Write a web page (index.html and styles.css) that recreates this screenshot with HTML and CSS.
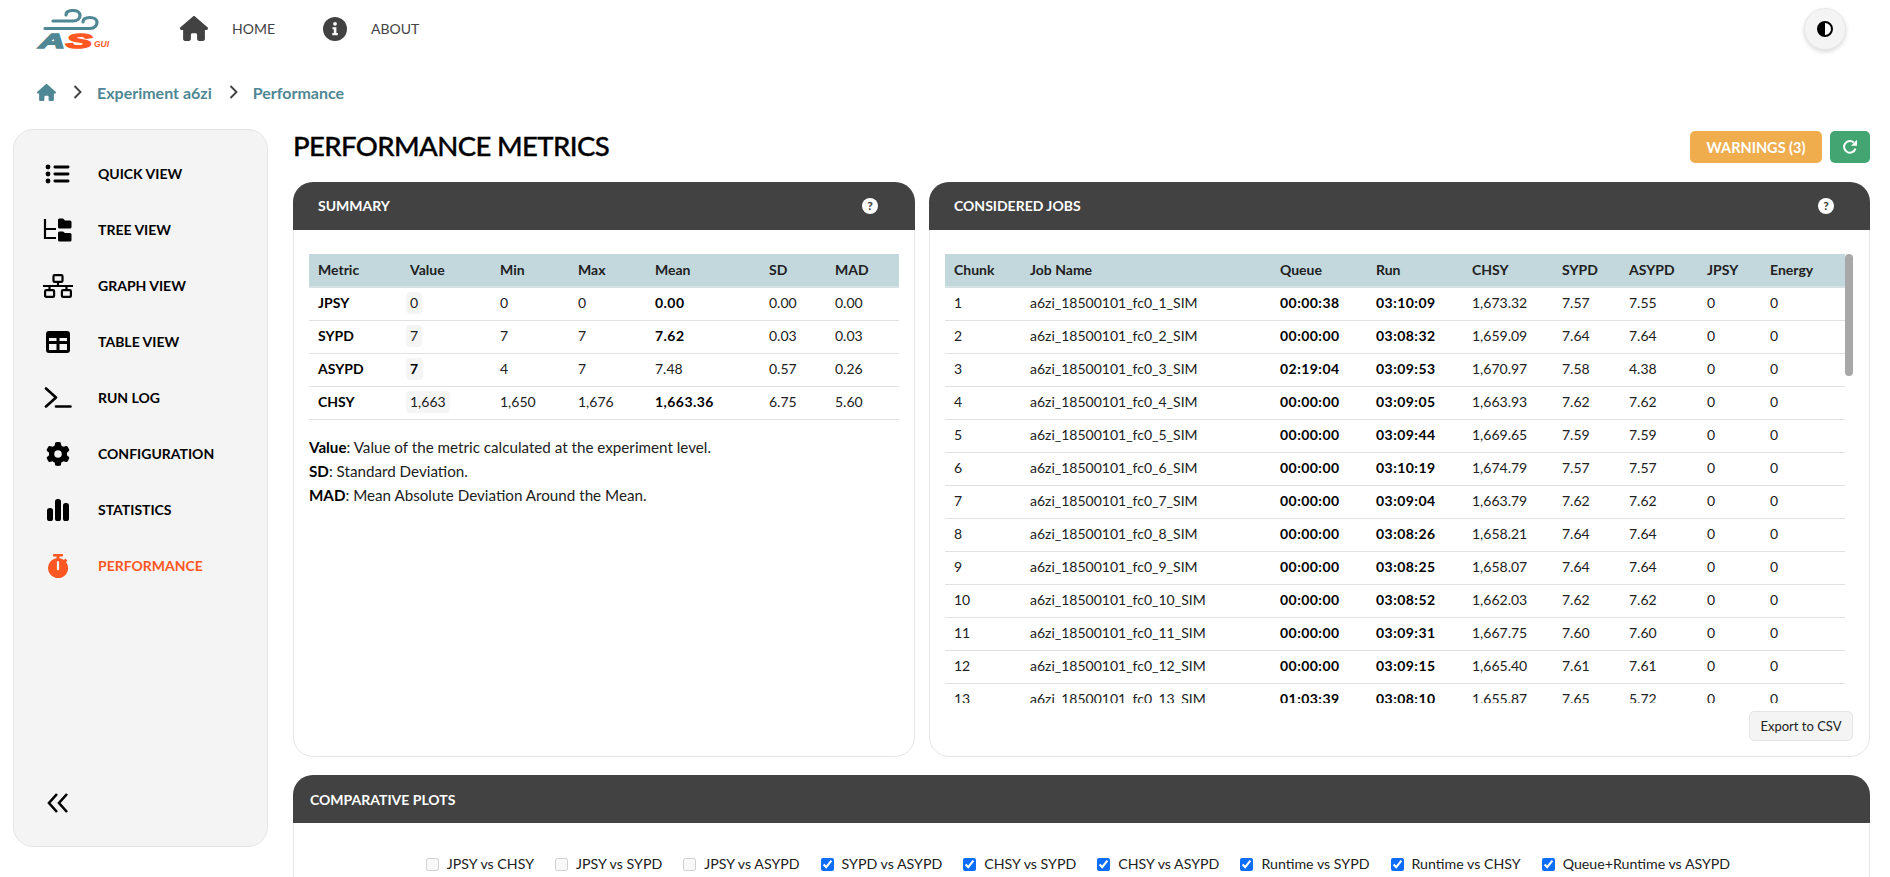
FILE: index.html
```html
<!DOCTYPE html>
<html lang="en">
<head>
    <meta charset="UTF-8">
    <title>Performance - Experiment a6zi</title>
    <link rel="stylesheet" href="styles.css">
</head>
<body>
    <nav class="navbar">
        <a class="logo">
            <svg class="logo-wind" viewBox="0 0 76 24" width="76" height="24">
                <path d="M17 12 H37 C42 12 44 9 44 6.5 C44 3.5 41 1.5 37 1.5 C33 1.5 30 3 30 6" fill="none" stroke="#4f8794" stroke-width="3.2" stroke-linecap="round"/>
                <path d="M9 19.5 H54 C59 19.5 61 16 61 13.5 C61 10.5 58 8.5 54 8.5 C50 8.5 47 10 47 13" fill="none" stroke="#4f8794" stroke-width="3.2" stroke-linecap="round"/>
            </svg>
            <span class="logo-text"><span class="logo-a">A</span><span class="logo-s">S</span><span class="logo-gui">GUI</span></span>
        </a>
        <a class="nav-link nav-home">
            <svg class="nav-icon" viewBox="0 0 576 512" width="28" height="25"><path fill="#424242" d="M575.8 255.5c0 18-15 32.1-32 32.1h-32l.7 160.2c0 2.7-.2 5.4-.5 8.1V472c0 22.1-17.9 40-40 40H456c-1.1 0-2.2 0-3.3-.1c-1.4 .1-2.8 .1-4.2 .1H416 392c-22.1 0-40-17.9-40-40V448 384c0-17.7-14.3-32-32-32H256c-17.7 0-32 14.3-32 32v64 24c0 22.1-17.9 40-40 40H160 128.1c-1.5 0-3-.1-4.5-.2c-1.2 .1-2.4 .2-3.6 .2H104c-22.1 0-40-17.9-40-40V360c0-.9 0-1.9 .1-2.8V287.6H32c-18 0-32-14-32-32.1c0-9 3-17 10-24L266.4 8c7-7 15-8 22-8s15 2 21 7L564.8 231.5c8 7 12 15 11 24z"/></svg>
            <span>HOME</span>
        </a>
        <a class="nav-link nav-about">
            <svg class="nav-icon" viewBox="0 0 24 24" width="24" height="24">
                <circle cx="12" cy="12" r="12" fill="#424242"/>
                <circle cx="12" cy="6.8" r="1.9" fill="#fff"/>
                <path d="M9.5 10.2 H13.4 V16 H14.8 V18.2 H9.3 V16 H10.8 V12.3 H9.5 Z" fill="#fff"/>
            </svg>
            <span>ABOUT</span>
        </a>
        <button class="theme-toggle">
            <svg viewBox="0 0 16 16" width="16" height="16">
                <circle cx="8" cy="8" r="7" fill="#fff" stroke="#000" stroke-width="2"/>
                <path d="M8 1 A7 7 0 0 0 8 15 Z" fill="#000"/>
            </svg>
        </button>
    </nav>

    <div class="breadcrumb">
        <svg viewBox="0 0 576 512" width="19" height="17"><path fill="#4f8794" d="M575.8 255.5c0 18-15 32.1-32 32.1h-32l.7 160.2c0 2.7-.2 5.4-.5 8.1V472c0 22.1-17.9 40-40 40H456c-1.1 0-2.2 0-3.3-.1c-1.4 .1-2.8 .1-4.2 .1H416 392c-22.1 0-40-17.9-40-40V448 384c0-17.7-14.3-32-32-32H256c-17.7 0-32 14.3-32 32v64 24c0 22.1-17.9 40-40 40H160 128.1c-1.5 0-3-.1-4.5-.2c-1.2 .1-2.4 .2-3.6 .2H104c-22.1 0-40-17.9-40-40V360c0-.9 0-1.9 .1-2.8V287.6H32c-18 0-32-14-32-32.1c0-9 3-17 10-24L266.4 8c7-7 15-8 22-8s15 2 21 7L564.8 231.5c8 7 12 15 11 24z"/></svg>
        <svg class="crumb-sep" viewBox="0 0 9 14" width="9" height="14"><path d="M1.5 1 L7.5 7 L1.5 13" fill="none" stroke="#424242" stroke-width="1.9"/></svg>
        <a class="crumb">Experiment a6zi</a>
        <svg class="crumb-sep" viewBox="0 0 9 14" width="9" height="14"><path d="M1.5 1 L7.5 7 L1.5 13" fill="none" stroke="#424242" stroke-width="1.9"/></svg>
        <a class="crumb">Performance</a>
    </div>

    <div class="layout">
        <aside class="sidebar">
            <ul class="side-menu">
                <li class="side-item">
                    <svg viewBox="0 0 26 22" width="26" height="22"><g fill="#000"><circle cx="3" cy="4" r="2.4"/><circle cx="3" cy="11" r="2.4"/><circle cx="3" cy="18" r="2.4"/><rect x="8.5" y="2.6" width="16" height="2.8" rx="1.4"/><rect x="8.5" y="9.6" width="16" height="2.8" rx="1.4"/><rect x="8.5" y="16.6" width="16" height="2.8" rx="1.4"/></g></svg>
                    <span>QUICK VIEW</span>
                </li>
                <li class="side-item">
                    <svg viewBox="0 0 30 24" width="30" height="24"><path d="M2 1 V20 H13 M2 11 H13" fill="none" stroke="#000" stroke-width="2.2"/><path d="M15 2 A1.5 1.5 0 0 1 16.5 .5 H20 L22 2.5 H27 A1.5 1.5 0 0 1 28.5 4 V9 A1.5 1.5 0 0 1 27 10.5 H16.5 A1.5 1.5 0 0 1 15 9 Z M15 15 A1.5 1.5 0 0 1 16.5 13.5 H20 L22 15 H27 A1.5 1.5 0 0 1 28.5 16.5 V22 A1.5 1.5 0 0 1 27 23.5 H16.5 A1.5 1.5 0 0 1 15 22 Z" fill="#000"/></svg>
                    <span>TREE VIEW</span>
                </li>
                <li class="side-item">
                    <svg viewBox="0 0 30 24" width="30" height="24"><g fill="none" stroke="#000" stroke-width="2.2"><rect x="10.5" y="1.1" width="9" height="6.8" rx="1.2"/><rect x="2.1" y="16.1" width="9" height="6.8" rx="1.2"/><rect x="18.9" y="16.1" width="9" height="6.8" rx="1.2"/><path d="M15 8 V12 M0 12 H30 M6.5 12 V16 M23.5 12 V16"/></g></svg>
                    <span>GRAPH VIEW</span>
                </li>
                <li class="side-item">
                    <svg viewBox="0 0 24 22" width="24" height="22"><path fill-rule="evenodd" d="M3 0 H21 A3 3 0 0 1 24 3 V19 A3 3 0 0 1 21 22 H3 A3 3 0 0 1 0 19 V3 A3 3 0 0 1 3 0 Z M3 7 V10 H10.5 V7 Z M13.5 7 V10 H21 V7 Z M3 13 V19 H10.5 V13 Z M13.5 13 V19 H21 V13 Z" fill="#000"/></svg>
                    <span>TABLE VIEW</span>
                </li>
                <li class="side-item">
                    <svg viewBox="0 0 28 22" width="28" height="22"><path d="M2 1.5 L12 10.5 L2 19.5 M12 19.5 H26.5" fill="none" stroke="#000" stroke-width="2.6" stroke-linecap="round" stroke-linejoin="round"/></svg>
                    <span>RUN LOG</span>
                </li>
                <li class="side-item">
                    <svg viewBox="0 0 512 512" width="24" height="24"><path fill="#000" d="M495.9 166.6c3.2 8.7 .5 18.4-6.4 24.6l-43.3 39.4c1.1 8.3 1.7 16.8 1.7 25.4s-.6 17.1-1.7 25.4l43.3 39.4c6.9 6.2 9.6 15.9 6.4 24.6c-4.4 11.9-9.7 23.3-15.8 34.3l-4.7 8.1c-6.6 11-14 21.4-22.1 31.2c-5.9 7.2-15.7 9.6-24.5 6.8l-55.7-17.7c-13.4 10.3-28.2 18.9-44 25.4l-12.5 57.1c-2 9.1-9 16.3-18.2 17.8c-13.8 2.3-28 3.5-42.5 3.5s-28.7-1.2-42.5-3.5c-9.2-1.5-16.2-8.7-18.2-17.8l-12.5-57.1c-15.8-6.5-30.6-15.1-44-25.4L83.1 425.9c-8.8 2.8-18.6 .3-24.5-6.8c-8.1-9.8-15.5-20.2-22.1-31.2l-4.7-8.1c-6.1-11-11.4-22.4-15.8-34.3c-3.2-8.7-.5-18.4 6.4-24.6l43.3-39.4C64.6 273.1 64 264.6 64 256s.6-17.1 1.7-25.4L22.4 191.2c-6.9-6.2-9.6-15.9-6.4-24.6c4.4-11.9 9.7-23.3 15.8-34.3l4.7-8.1c6.6-11 14-21.4 22.1-31.2c5.9-7.2 15.7-9.6 24.5-6.8l55.7 17.7c13.4-10.3 28.2-18.9 44-25.4l12.5-57.1c2-9.1 9-16.3 18.2-17.8C227.3 1.2 241.5 0 256 0s28.7 1.2 42.5 3.5c9.2 1.5 16.2 8.7 18.2 17.8l12.5 57.1c15.8 6.5 30.6 15.1 44 25.4l55.7-17.7c8.8-2.8 18.6-.3 24.5 6.8c8.1 9.8 15.5 20.2 22.1 31.2l4.7 8.1c6.1 11 11.4 22.4 15.8 34.3zM256 336a80 80 0 1 0 0-160 80 80 0 1 0 0 160z"/></svg>
                    <span>CONFIGURATION</span>
                </li>
                <li class="side-item">
                    <svg viewBox="0 0 22 22" width="22" height="22"><g fill="#000"><rect x="0" y="9" width="6" height="13" rx="2.6"/><rect x="8" y="0" width="6" height="22" rx="2.6"/><rect x="16" y="4" width="6" height="18" rx="2.6"/></g></svg>
                    <span>STATISTICS</span>
                </li>
                <li class="side-item side-active">
                    <svg viewBox="0 0 22 24" width="22" height="24"><path fill="#ff5722" fill-rule="evenodd" d="M7 0 H15 A1 1 0 0 1 15 2.4 H12.4 V4.2 A10 10 0 0 1 17 6 L18.4 4.6 L20.4 6.6 L19 8 A10 10 0 1 1 9.6 4.2 V2.4 H7 A1 1 0 0 1 7 0 Z M9.9 8 V15.2 A1.1 1.1 0 0 0 12.1 15.2 V8 A1.1 1.1 0 0 0 9.9 8 Z"/></svg>
                    <span>PERFORMANCE</span>
                </li>
            </ul>
            <div class="side-collapse">
                <svg viewBox="0 0 22 20" width="22" height="20"><path d="M10 1 L2 10 L10 19 M20 1 L12 10 L20 19" fill="none" stroke="#000" stroke-width="2.6"/></svg>
            </div>
        </aside>

        <main class="content">
            <div class="title-row">
                <h1 class="page-title">PERFORMANCE METRICS</h1>
                <div class="title-actions">
                    <button class="btn-warnings">WARNINGS (3)</button>
                    <button class="btn-refresh">
                        <svg viewBox="0 0 16 16" width="16" height="16"><path d="M13.4 9.6 A5.8 5.8 0 1 1 11.8 3.6" fill="none" stroke="#fff" stroke-width="2"/><path d="M15 .8 V6.8 H9 Z" fill="#fff"/></svg>
                    </button>
                </div>
            </div>

            <div class="top-cards">
                <section class="card">
                    <header class="card-header card-header-wide">
                        <span>SUMMARY</span>
                        <span class="help-icon">?</span>
                    </header>
                    <div class="card-body">
                        <table class="data-table summary-table">
                            <thead>
                                <tr><th>Metric</th><th>Value</th><th>Min</th><th>Max</th><th>Mean</th><th>SD</th><th>MAD</th></tr>
                            </thead>
                            <tbody>
                                <tr><td><b>JPSY</b></td><td><span class="value-chip">0</span></td><td>0</td><td>0</td><td><b>0.00</b></td><td>0.00</td><td>0.00</td></tr>
                                <tr><td><b>SYPD</b></td><td><span class="value-chip">7</span></td><td>7</td><td>7</td><td><b>7.62</b></td><td>0.03</td><td>0.03</td></tr>
                                <tr><td><b>ASYPD</b></td><td><span class="value-chip"><b>7</b></span></td><td>4</td><td>7</td><td>7.48</td><td>0.57</td><td>0.26</td></tr>
                                <tr><td><b>CHSY</b></td><td><span class="value-chip">1,663</span></td><td>1,650</td><td>1,676</td><td><b>1,663.36</b></td><td>6.75</td><td>5.60</td></tr>
                            </tbody>
                        </table>
                        <div class="notes">
                            <p><b>Value</b>: Value of the metric calculated at the experiment level.</p>
                            <p><b>SD</b>: Standard Deviation.</p>
                            <p><b>MAD</b>: Mean Absolute Deviation Around the Mean.</p>
                        </div>
                    </div>
                </section>

                <section class="card">
                    <header class="card-header card-header-wide">
                        <span>CONSIDERED JOBS</span>
                        <span class="help-icon help-jobs">?</span>
                    </header>
                    <div class="card-body jobs-body">
                        <div class="jobs-scroll">
                            <table class="data-table jobs-table">
                                <thead>
                                    <tr><th>Chunk</th><th>Job Name</th><th>Queue</th><th>Run</th><th>CHSY</th><th>SYPD</th><th>ASYPD</th><th>JPSY</th><th>Energy</th></tr>
                                </thead>
                                <tbody>
                                    <tr><td>1</td><td>a6zi_18500101_fc0_1_SIM</td><td><b>00:00:38</b></td><td><b>03:10:09</b></td><td>1,673.32</td><td>7.57</td><td>7.55</td><td>0</td><td>0</td></tr>
                                    <tr><td>2</td><td>a6zi_18500101_fc0_2_SIM</td><td><b>00:00:00</b></td><td><b>03:08:32</b></td><td>1,659.09</td><td>7.64</td><td>7.64</td><td>0</td><td>0</td></tr>
                                    <tr><td>3</td><td>a6zi_18500101_fc0_3_SIM</td><td><b>02:19:04</b></td><td><b>03:09:53</b></td><td>1,670.97</td><td>7.58</td><td>4.38</td><td>0</td><td>0</td></tr>
                                    <tr><td>4</td><td>a6zi_18500101_fc0_4_SIM</td><td><b>00:00:00</b></td><td><b>03:09:05</b></td><td>1,663.93</td><td>7.62</td><td>7.62</td><td>0</td><td>0</td></tr>
                                    <tr><td>5</td><td>a6zi_18500101_fc0_5_SIM</td><td><b>00:00:00</b></td><td><b>03:09:44</b></td><td>1,669.65</td><td>7.59</td><td>7.59</td><td>0</td><td>0</td></tr>
                                    <tr><td>6</td><td>a6zi_18500101_fc0_6_SIM</td><td><b>00:00:00</b></td><td><b>03:10:19</b></td><td>1,674.79</td><td>7.57</td><td>7.57</td><td>0</td><td>0</td></tr>
                                    <tr><td>7</td><td>a6zi_18500101_fc0_7_SIM</td><td><b>00:00:00</b></td><td><b>03:09:04</b></td><td>1,663.79</td><td>7.62</td><td>7.62</td><td>0</td><td>0</td></tr>
                                    <tr><td>8</td><td>a6zi_18500101_fc0_8_SIM</td><td><b>00:00:00</b></td><td><b>03:08:26</b></td><td>1,658.21</td><td>7.64</td><td>7.64</td><td>0</td><td>0</td></tr>
                                    <tr><td>9</td><td>a6zi_18500101_fc0_9_SIM</td><td><b>00:00:00</b></td><td><b>03:08:25</b></td><td>1,658.07</td><td>7.64</td><td>7.64</td><td>0</td><td>0</td></tr>
                                    <tr><td>10</td><td>a6zi_18500101_fc0_10_SIM</td><td><b>00:00:00</b></td><td><b>03:08:52</b></td><td>1,662.03</td><td>7.62</td><td>7.62</td><td>0</td><td>0</td></tr>
                                    <tr><td>11</td><td>a6zi_18500101_fc0_11_SIM</td><td><b>00:00:00</b></td><td><b>03:09:31</b></td><td>1,667.75</td><td>7.60</td><td>7.60</td><td>0</td><td>0</td></tr>
                                    <tr><td>12</td><td>a6zi_18500101_fc0_12_SIM</td><td><b>00:00:00</b></td><td><b>03:09:15</b></td><td>1,665.40</td><td>7.61</td><td>7.61</td><td>0</td><td>0</td></tr>
                                    <tr><td>13</td><td>a6zi_18500101_fc0_13_SIM</td><td><b>01:03:39</b></td><td><b>03:08:10</b></td><td>1,655.87</td><td>7.65</td><td>5.72</td><td>0</td><td>0</td></tr>
                                </tbody>
                            </table>
                            <div class="scroll-thumb"></div>
                        </div>
                        <div class="export-row">
                            <button class="btn-export">Export to CSV</button>
                        </div>
                    </div>
                </section>
            </div>

            <section class="card plots-card">
                <header class="card-header">
                    <span>COMPARATIVE PLOTS</span>
                </header>
                <div class="plot-options">
                    <label><input type="checkbox" disabled>JPSY vs CHSY</label>
                    <label><input type="checkbox" disabled>JPSY vs SYPD</label>
                    <label><input type="checkbox" disabled>JPSY vs ASYPD</label>
                    <label><input type="checkbox" checked>SYPD vs ASYPD</label>
                    <label><input type="checkbox" checked>CHSY vs SYPD</label>
                    <label><input type="checkbox" checked>CHSY vs ASYPD</label>
                    <label><input type="checkbox" checked>Runtime vs SYPD</label>
                    <label><input type="checkbox" checked>Runtime vs CHSY</label>
                    <label><input type="checkbox" checked>Queue+Runtime vs ASYPD</label>
                </div>
            </section>
        </main>
    </div>
</body>
</html>
```

FILE: styles.css
```css
* {
    box-sizing: border-box;
}
html, body {
    height: 877px;
    overflow: hidden;
}
body {
    margin: 0;
    font-family: Lato, "Noto Sans", sans-serif;
    font-size: 14px;
    color: #212121;
    background: #fff;
}

/* top bar */
.navbar {
    display: flex;
    align-items: center;
    height: 57px;
    padding: 0 44px 0 36px;
}
.logo {
    display: flex;
    flex-direction: column;
    width: 76px;
    height: 40px;
    margin-top: 1px;
}
.logo-wind {
    display: block;
}
.logo-text {
    display: flex;
    align-items: flex-end;
    height: 16px;
    padding-left: 3px;
    font-family: "Liberation Sans", sans-serif;
    font-weight: 700;
    font-style: italic;
    line-height: 16px;
}
.logo-a, .logo-s {
    display: inline-block;
    font-size: 21px;
    -webkit-text-stroke: 1.6px currentColor;
    transform-origin: left bottom;
}
.logo-a { color: #4f8794; width: 27px; transform: scaleX(1.7); }
.logo-s { color: #ff5722; width: 28px; transform: scaleX(1.85); }
.logo-gui {
    font-size: 8.5px;
    color: #ff5722;
    line-height: 10px;
}
.nav-link {
    display: flex;
    align-items: center;
    font-size: 14px;
    color: #424242;
}
.nav-home {
    margin-left: 68px;
    gap: 24px;
}
.nav-about {
    margin-left: 48px;
    gap: 24px;
}
.theme-toggle {
    display: flex;
    align-items: center;
    justify-content: center;
    width: 42px;
    height: 42px;
    margin-left: auto;
    padding: 0;
    border: 1px solid #e8e8e8;
    border-radius: 50%;
    background: #f4f4f4;
    box-shadow: 0 2px 4px rgba(0,0,0,0.15);
}

/* breadcrumb */
.breadcrumb {
    display: flex;
    align-items: center;
    height: 70px;
    margin-bottom: 2px;
    padding-left: 37px;
}
.crumb-sep {
    margin: 0 15px 0 17px;
}
.crumb {
    font-size: 16px;
    font-weight: 700;
    color: #4f8794;
}

/* page layout */
.layout {
    display: flex;
    gap: 25px;
    padding: 0 20px 0 13px;
}
.sidebar {
    display: flex;
    flex-direction: column;
    justify-content: space-between;
    flex: none;
    width: 255px;
    height: 718px;
    padding: 16px 0 33px;
    border: 1px solid #e5e5e5;
    border-radius: 20px;
    background: #f4f4f4;
}
.side-menu {
    margin: 0;
    padding: 0;
    list-style: none;
}
.side-item {
    display: flex;
    align-items: center;
    height: 56px;
    padding: 0 0 2px 84px;
    font-size: 14px;
    font-weight: 700;
    color: #000;
    position: relative;
}
.side-item svg {
    position: absolute;
    left: 44px;
    top: 50%;
    transform: translate(-50%, -50%);
}
.side-active {
    color: #ff5722;
}
.side-collapse {
    display: flex;
    padding-left: 33px;
}
.content {
    flex: 1;
    min-width: 0;
}
.title-row {
    display: flex;
    justify-content: space-between;
    align-items: flex-start;
    height: 53px;
    padding-top: 1px;
}
.page-title {
    margin: 0;
    font-size: 27.5px;
    line-height: 32px;
    font-weight: 500;
    letter-spacing: -0.6px;
    -webkit-text-stroke: 0.35px #000;
    color: #000;
}
.title-actions {
    display: flex;
    gap: 8px;
    margin-top: 1px;
}
.btn-warnings {
    width: 132px;
    height: 32px;
    border: none;
    border-radius: 5px;
    background: #f0ad4e;
    color: #fff;
    font: 700 14.5px Lato, sans-serif;
}
.btn-refresh {
    display: flex;
    align-items: center;
    justify-content: center;
    width: 40px;
    height: 32px;
    padding: 0;
    border: none;
    border-radius: 5px;
    background: #43a672;
}

/* cards */
.top-cards {
    display: grid;
    grid-template-columns: 622px 941px;
    gap: 14px;
    height: 575px;
}
.card {
    display: flex;
    flex-direction: column;
    border: 1px solid #e5e5e5;
    border-radius: 20px;
    background: #fff;
}
.card-header {
    display: flex;
    align-items: center;
    justify-content: space-between;
    flex: none;
    height: 48px;
    margin: -1px -1px 0;
    padding: 0 17px;
    border-radius: 20px 20px 0 0;
    background: #424242;
    color: #fff;
    font-size: 14px;
    font-weight: 700;
}
.card-header-wide {
    padding: 0 37px 1px 25px;
}
.help-icon {
    display: flex;
    align-items: center;
    justify-content: center;
    width: 16px;
    height: 16px;
    border-radius: 50%;
    background: #fff;
    color: #424242;
    font-size: 12px;
    font-weight: 900;
}
.help-jobs {
    margin-right: -1px;
}
.card-body {
    display: flex;
    flex-direction: column;
    flex: 1;
    min-height: 0;
    padding: 24px 15px 15px;
}
.jobs-body {
    padding-right: 16px;
}

/* tables */
.data-table {
    width: 100%;
    border-collapse: collapse;
    table-layout: fixed;
    font-size: 14px;
}
.data-table th {
    height: 33px;
    padding: 0 9px 2px;
    background: #c2d8dd;
    border-bottom: 2px solid #d5e3e6;
    text-align: left;
    font-weight: 700;
    color: #212121;
}
.data-table td {
    height: 33px;
    padding: 0 9px 2px;
    border-bottom: 1px solid #e0e0e0;
    white-space: nowrap;
}
.data-table b {
    color: #000;
}
.data-table td:not(:first-child) b {
    letter-spacing: 0.45px;
}
.summary-table th:nth-child(1) { width: 92px; }
.summary-table th:nth-child(2) { width: 90px; }
.summary-table th:nth-child(3) { width: 78px; }
.summary-table th:nth-child(4) { width: 77px; }
.summary-table th:nth-child(5) { width: 114px; }
.summary-table th:nth-child(6) { width: 66px; }
.value-chip {
    display: inline-block;
    margin-left: -4px;
    padding: 0 4px;
    line-height: 22px;
    border-radius: 4px;
    background: #f5f5f5;
}
.notes {
    margin-top: 15px;
}
.notes p {
    margin: 0;
    line-height: 24px;
    font-size: 15.2px;
}
.notes b {
    color: #000;
}
.jobs-scroll {
    position: relative;
    height: 449px;
    padding-right: 8px;
    overflow: hidden;
}
.jobs-table th:nth-child(1) { width: 76px; }
.jobs-table th:nth-child(2) { width: 250px; }
.jobs-table th:nth-child(3) { width: 96px; }
.jobs-table th:nth-child(4) { width: 96px; }
.jobs-table th:nth-child(5) { width: 90px; }
.jobs-table th:nth-child(6) { width: 67px; }
.jobs-table th:nth-child(7) { width: 78px; }
.jobs-table th:nth-child(8) { width: 63px; }
.scroll-thumb {
    position: absolute;
    top: 0;
    right: 0;
    width: 8px;
    height: 122px;
    border-radius: 4px;
    background: #a8a8a8;
}
.export-row {
    display: flex;
    justify-content: flex-end;
    margin-top: 8px;
}
.btn-export {
    width: 104px;
    height: 30px;
    padding: 0;
    border: 1px solid #e5e5e5;
    border-radius: 5px;
    background: #f4f4f4;
    color: #212121;
    font: 400 13px Lato, sans-serif;
}

/* comparative plots */
.plots-card {
    margin-top: 18px;
    height: 300px;
}
.plot-options {
    display: flex;
    justify-content: center;
    gap: 21px;
    padding: 31px 7px 0 0;
    font-size: 14.2px;
}
.plot-options label {
    display: flex;
    align-items: center;
    gap: 8px;
    line-height: 20px;
}
.plot-options input {
    width: 13px;
    height: 13px;
    margin: 0;
    accent-color: #0d6efd;
}
```
